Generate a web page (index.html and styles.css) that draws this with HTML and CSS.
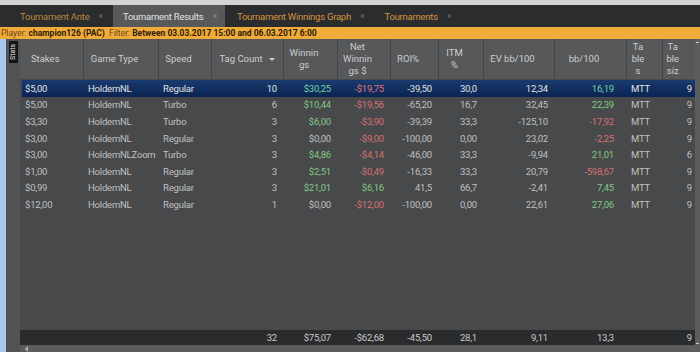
FILE: index.html
```html
<!DOCTYPE html>
<html lang="en">
<head>
    <meta charset="UTF-8">
    <title>Tournament Results</title>
    <link rel="stylesheet" href="styles.css">
</head>
<body>
  <div class="window">
    <div class="chrome"></div>

    <!-- tabs -->
    <div class="tabs">
        <div class="tab tab-dim">Tournament Ante <span class="x">&#215;</span></div>
        <div class="tab active">Tournament Results <span class="x">&#215;</span></div>
        <div class="tab">Tournament Winnings Graph <span class="x">&#215;</span></div>
        <div class="tab">Tournaments <span class="x">&#215;</span></div>
    </div>

    <div class="filter">
        Player: <b>champion126 (PAC)</b>&nbsp; Filter: <b>Between 03.03.2017 15:00 and 06.03.2017 6:00</b>
    </div>

    <div class="main">
        <div class="edge"></div>
        <div class="side"><span class="stats">Stats</span></div>

        <div class="grid">
            <table class="head">
                <colgroup>
                    <col class="c1"><col class="c2"><col class="c3"><col class="c4"><col class="c5"><col class="c6">
                    <col class="c7"><col class="c8"><col class="c9"><col class="c10"><col class="c11"><col class="c12">
                </colgroup>
                <tr>
                    <th>Stakes</th>
                    <th>Game Type</th>
                    <th>Speed</th>
                    <th class="sorted">Tag Count<span class="arrow"></span></th>
                    <th>Winnin<br>gs</th>
                    <th>Net<br>Winnin<br>gs $</th>
                    <th>ROI%</th>
                    <th>ITM<br>%</th>
                    <th>EV bb/100</th>
                    <th>bb/100</th>
                    <th>Ta<br>ble<br>s</th>
                    <th>Ta<br>ble<br>siz</th>
                </tr>
            </table>

            <table class="rows">
                <colgroup>
                    <col class="c1"><col class="c2"><col class="c3"><col class="c4"><col class="c5"><col class="c6">
                    <col class="c7"><col class="c8"><col class="c9"><col class="c10"><col class="c11"><col class="c12">
                </colgroup>
                <tr class="selected">
                    <td>$5,00</td><td>HoldemNL</td><td>Regular</td><td class="num">10</td>
                    <td class="num pos">$30,25</td><td class="num neg">-$19,75</td><td class="num">-39,50</td>
                    <td class="num">30,0</td><td class="num">12,34</td><td class="num bb pos">16,19</td>
                    <td>MTT</td><td class="num last">9</td>
                </tr>
                <tr>
                    <td>$5,00</td><td>HoldemNL</td><td>Turbo</td><td class="num">6</td>
                    <td class="num pos">$10,44</td><td class="num neg">-$19,56</td><td class="num">-65,20</td>
                    <td class="num">16,7</td><td class="num">32,45</td><td class="num bb pos">22,39</td>
                    <td>MTT</td><td class="num last">9</td>
                </tr>
                <tr>
                    <td>$3,30</td><td>HoldemNL</td><td>Turbo</td><td class="num">3</td>
                    <td class="num pos">$6,00</td><td class="num neg">-$3,90</td><td class="num">-39,39</td>
                    <td class="num">33,3</td><td class="num">-125,10</td><td class="num bb neg">-17,92</td>
                    <td>MTT</td><td class="num last">9</td>
                </tr>
                <tr>
                    <td>$3,00</td><td>HoldemNL</td><td>Regular</td><td class="num">3</td>
                    <td class="num">$0,00</td><td class="num neg">-$9,00</td><td class="num">-100,00</td>
                    <td class="num">0,00</td><td class="num">23,02</td><td class="num bb neg">-2,25</td>
                    <td>MTT</td><td class="num last">9</td>
                </tr>
                <tr>
                    <td>$3,00</td><td>HoldemNLZoom</td><td>Turbo</td><td class="num">3</td>
                    <td class="num pos">$4,86</td><td class="num neg">-$4,14</td><td class="num">-46,00</td>
                    <td class="num">33,3</td><td class="num">-9,94</td><td class="num bb pos">21,01</td>
                    <td>MTT</td><td class="num last">6</td>
                </tr>
                <tr>
                    <td>$1,00</td><td>HoldemNL</td><td>Regular</td><td class="num">3</td>
                    <td class="num pos">$2,51</td><td class="num neg">-$0,49</td><td class="num">-16,33</td>
                    <td class="num">33,3</td><td class="num">20,79</td><td class="num bb neg">-598,67</td>
                    <td>MTT</td><td class="num last">9</td>
                </tr>
                <tr>
                    <td>$0,99</td><td>HoldemNL</td><td>Regular</td><td class="num">3</td>
                    <td class="num pos">$21,01</td><td class="num pos">$6,16</td><td class="num">41,5</td>
                    <td class="num">66,7</td><td class="num">-2,41</td><td class="num bb pos">7,45</td>
                    <td>MTT</td><td class="num last">9</td>
                </tr>
                <tr>
                    <td>$12,00</td><td>HoldemNL</td><td>Regular</td><td class="num">1</td>
                    <td class="num">$0,00</td><td class="num neg">-$12,00</td><td class="num">-100,00</td>
                    <td class="num">0,00</td><td class="num">22,61</td><td class="num bb pos">27,06</td>
                    <td>MTT</td><td class="num last">9</td>
                </tr>
            </table>

            <div class="spacer"></div>

            <table class="foot">
                <colgroup>
                    <col class="c1"><col class="c2"><col class="c3"><col class="c4"><col class="c5"><col class="c6">
                    <col class="c7"><col class="c8"><col class="c9"><col class="c10"><col class="c11"><col class="c12">
                </colgroup>
                <tr>
                    <td></td><td></td><td></td><td class="num">32</td>
                    <td class="num">$75,07</td><td class="num">-$62,68</td><td class="num">-45,50</td>
                    <td class="num">28,1</td><td class="num">9,11</td><td class="num bb">13,3</td>
                    <td></td><td class="num last">9</td>
                </tr>
            </table>

            <div class="hscroll"><span class="larrow"></span></div>
        </div>

        <div class="vscroll">
            <span class="tick top"></span>
            <span class="tick bottom"></span>
        </div>
    </div>
  </div>
</body>
</html>
```

FILE: styles.css
```css
body {
    margin: 0;
    padding: 0;
    background-color: #47494b;
    font-family: Roboto, "Noto Sans", sans-serif;
    font-size: 9.5px;
}

.window {
    width: 700px;
    height: 352px;
    display: flex;
    flex-direction: column;
    overflow: hidden;
}

/* light window chrome on top */
.chrome {
    height: 5px;
    background-color: #d3d4d6;
}

.tabs {
    height: 22px;
    background-color: #2b2c2d;
    display: flex;
    align-items: stretch;
    padding-left: 10px;
    letter-spacing: -0.25px;
}

.tab {
    display: flex;
    align-items: center;
    padding: 0 8px 0 10px;
    margin-right: 2px;
    color: #d3943d;
    white-space: nowrap;
}

.tab-dim {
    color: #b8853f;
}

.tab .x {
    color: #6a6a6a;
    font-size: 9px;
    margin-left: 9px;
}

.tab.active {
    background-color: #58595b;
    color: #e2e2e2;
}

.tab.active .x {
    color: #8a8a8a;
}

.filter {
    height: 12px;
    line-height: 12px;
    background-color: #f1ab3b;
    color: #6a4812;
    padding-left: 1px;
    white-space: nowrap;
    font-size: 8.5px;
}

.filter b {
    color: #2e2008;
}

.main {
    flex: 1;
    display: flex;
    min-height: 0;
}

.edge {
    width: 6px;
    background-color: #a9c9ea;
}

.side {
    width: 14px;
    background-color: #515254;
    position: relative;
}

.stats {
    position: absolute;
    left: 3px;
    top: 2px;
    width: 9px;
    height: 22px;
    background-color: #161616;
    color: #e0e0e0;
    font-size: 7px;
    writing-mode: vertical-rl;
    transform: rotate(180deg);
    text-align: center;
    line-height: 9px;
}

.grid {
    width: 675px;
    display: flex;
    flex-direction: column;
    background-color: #47494b;
}

table {
    border-collapse: collapse;
    table-layout: fixed;
    width: 675px;
}

.c1 { width: 63px; }
.c2 { width: 75px; }
.c3 { width: 53px; }
.c4 { width: 72px; }
.c5 { width: 54px; }
.c6 { width: 53px; }
.c7 { width: 48px; }
.c8 { width: 45px; }
.c9 { width: 71px; }
.c10 { width: 72px; }
.c11 { width: 36px; }
.c12 { width: 33px; }

.head {
    height: 40px;
    background-color: #56585a;
    margin-bottom: 1px;
}

.head th {
    font-weight: normal;
    color: #cdcdcd;
    line-height: 12px;
    padding: 0 12px 0 0;
    border-right: 1px solid #434446;
    text-align: center;
    position: relative;
}

.head th:last-child {
    border-right: none;
}

.arrow {
    position: absolute;
    right: 8px;
    top: 19px;
    border-left: 3px solid transparent;
    border-right: 3px solid transparent;
    border-top: 3px solid #d0d0d0;
}

.rows {
    margin-left: 2px;
    width: 673px;
}

.rows .c1 { width: 61px; }

.rows tr {
    height: 16.6px;
}

td {
    color: #c0c0c0;
    padding: 0 0 0 5px;
    white-space: nowrap;
    overflow: hidden;
    letter-spacing: -0.2px;
}

.rows td:first-child {
    padding-left: 3px;
}

td.num {
    text-align: right;
    padding: 0 6px 0 0;
}

td.bb {
    padding-right: 12px;
}

td.last {
    padding-right: 3px;
}

.pos { color: #84c884; }
.neg { color: #d87272; }

.rows tr.selected {
    background: linear-gradient(#1a3a6e, #0a2452);
}

.rows tr.selected td {
    color: #e2e2e2;
}

.rows tr.selected td.pos {
    color: #72d2a6;
}

.rows tr.selected td.neg {
    color: #e07a7a;
}

.spacer {
    flex: 1;
}

.foot {
    height: 15px;
    background-color: #2a2b2d;
}

.foot td {
    color: #cacaca;
}

.hscroll {
    height: 7px;
    background-color: #5b5c5e;
    position: relative;
}

.larrow {
    position: absolute;
    left: 5px;
    top: 1px;
    border-top: 3px solid transparent;
    border-bottom: 3px solid transparent;
    border-right: 3px solid #b0b0b0;
}

.vscroll {
    flex: 1;
    background-color: #5c5d5f;
    position: relative;
}

.tick {
    position: absolute;
    left: 1px;
    width: 3px;
    height: 1px;
    background-color: #cfcfcf;
}

.tick.top { top: 3px; }
.tick.bottom { top: 304px; }
```
